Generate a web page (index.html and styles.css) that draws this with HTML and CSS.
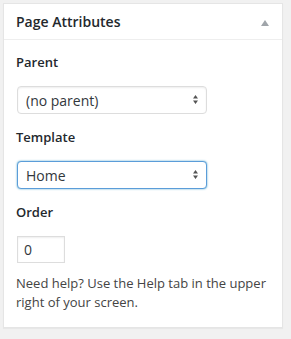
FILE: index.html
```html
<!DOCTYPE html>
<html lang="en">
<head>
    <meta charset="UTF-8">
    <meta name="viewport" content="width=device-width, initial-scale=1.0">
    <title>Page Attributes</title>
    <link rel="stylesheet" href="styles.css">
</head>
<body>
    <div class="postbox">
        <h2 class="hndle">
            <span>Page Attributes</span>
            <!-- collapse toggle -->
            <svg class="toggle" width="8" height="6" viewBox="0 0 8 6"><path d="M4 0 L8 6 L0 6 Z" fill="#a0a5aa"/></svg>
        </h2>

        <div class="inside">
            <p class="label">Parent</p>
            <div class="select-wrap">
                <select class="field">
                    <option>(no parent)</option>
                </select>
                <svg class="arrows" width="5" height="9" viewBox="0 0 5 9"><path d="M2.5 0 L5 3.5 L0 3.5 Z M0 5.5 L5 5.5 L2.5 9 Z" fill="#555"/></svg>
            </div>

            <p class="label">Template</p>
            <div class="select-wrap">
                <select class="field focused">
                    <option>Home</option>
                </select>
                <svg class="arrows" width="5" height="9" viewBox="0 0 5 9"><path d="M2.5 0 L5 3.5 L0 3.5 Z M0 5.5 L5 5.5 L2.5 9 Z" fill="#555"/></svg>
            </div>

            <p class="label">Order</p>
            <input class="order" type="text" value="0">

            <p class="help">Need help? Use the Help tab in the upper right of your screen.</p>
        </div>
    </div>
</body>
</html>
```

FILE: styles.css
```css
body {
    margin: 0;
    padding: 3px;
    background: #f1f1f1;
    font-family: 'Open Sans', 'Liberation Sans', sans-serif;
    color: #444;
}

.postbox {
    width: 280px;
    box-sizing: border-box;
    background: #fff;
    border: 1px solid #e5e5e5;
    box-shadow: 0 1px 1px rgba(0, 0, 0, 0.04);
}

.hndle {
    display: flex;
    justify-content: space-between;
    align-items: center;
    margin: 0;
    padding: 8px 12px;
    height: 19px;
    font-size: 14px;
    font-weight: 600;
    line-height: 19px;
    color: #23282d;
    border-bottom: 1px solid #eee;
}

.toggle {
    margin-right: 1px;
    margin-top: 2px;
}

.inside {
    padding: 13px 12px 15px;
}

.label {
    margin: 0 0 14px;
    font-size: 13px;
    font-weight: 600;
    line-height: 19px;
    color: #23282d;
}

.select-wrap {
    position: relative;
    width: 190px;
    margin: 0 0 14px 1px;
}

.field {
    -webkit-appearance: none;
    appearance: none;
    display: block;
    width: 190px;
    height: 28px;
    margin: 0;
    padding: 0 20px 0 8px;
    font-family: inherit;
    font-size: 14px;
    color: #32373c;
    background: #fff;
    border: 1px solid #ddd;
    border-radius: 4px;
    box-shadow: inset 0 1px 2px rgba(0, 0, 0, 0.07);
    outline: none;
}

.field.focused {
    border-color: #5b9dd9;
    box-shadow: 0 0 2px rgba(30, 140, 190, 0.8);
}

.arrows {
    position: absolute;
    right: 9px;
    top: 9px;
    pointer-events: none;
}

.order {
    display: block;
    box-sizing: border-box;
    width: 48px;
    height: 27px;
    margin: 0 0 11px 1px;
    padding: 0 6px;
    font-family: inherit;
    font-size: 14px;
    color: #32373c;
    border: 1px solid #ddd;
    box-shadow: inset 0 1px 2px rgba(0, 0, 0, 0.07);
    outline: none;
}

.help {
    margin: 0;
    font-size: 13px;
    line-height: 19px;
    color: #444;
}
```
